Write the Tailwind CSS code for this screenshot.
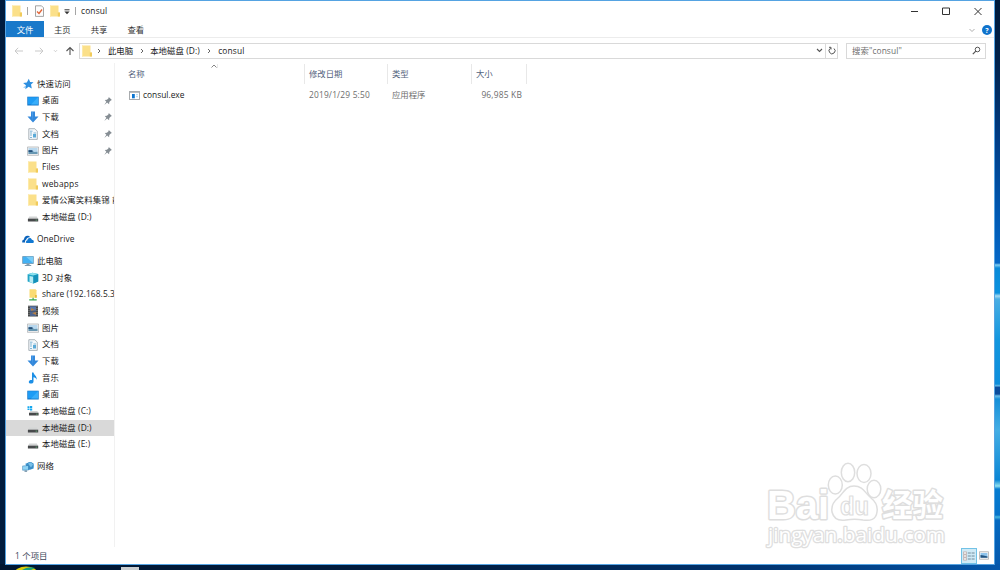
<!DOCTYPE html>
<html lang="zh-CN">
<head>
    <meta charset="UTF-8">
    <meta name="viewport" content="width=device-width, initial-scale=1.0">
    <title>consul</title>
    <script src="https://cdn.jsdelivr.net/npm/@tailwindcss/browser@4"></script>
</head>
<body class="w-[1000px] h-[570px] overflow-hidden relative bg-[#001c3e] font-['Open_Sans','Noto_Sans_CJK_SC',sans-serif] text-[8.4px] leading-none text-[#1a1a1a]">

    <!-- Icons -->
    <svg class="hidden">
        <symbol id="folder" viewBox="0 0 12 12"><path d="M1 .5h8.500v7h1.300v4H1z" fill="#fbe08a"/><path d="M8.800 7.500h2.200v4H8.800z" fill="#f1cb5c"/><path d="M1 .5h1v11H1z" fill="#fdeaa9"/></symbol>
        <symbol id="star" viewBox="0 0 12 12"><path d="M6.800.8l1.300 3.200 3.400.2-2.500 2.400.8 3.900-3.200-1.800-3.300 2.500.6-4L1.100 5l3.700-.6z" fill="#2d8fe0"/><path d="M1 9.500l3-1.800-.5 2.100zM.3 7.300L3 6.800z" fill="#7bbcf0"/></symbol>
        <symbol id="desktop" viewBox="0 0 12 12"><path d="M.3 1.700h11.400v8.800H.3z" fill="#1474c4"/><path d="M.9 2.200h10.200v7.200H.9z" fill="#1e9cf5"/><path d="M11 2.200v7.200H4z" fill="#39aefa"/></symbol>
        <symbol id="download" viewBox="0 0 12 12"><path d="M4 .6h4v5h3.500L6 11.500.5 5.600H4z" fill="#3388db"/><path d="M4.500 1h1.500v9z" fill="#4b9ce8"/></symbol>
        <symbol id="doc" viewBox="0 0 12 12"><path d="M1.800.7h6l2.500 2.500v8.200H1.800z" fill="#f4f8fb" stroke="#8c989f" stroke-width=".7"/><path d="M3 3.200h2.500M3 5h2M6.500 5H9M3 7h2M3 9.500h2" stroke="#64a6ce" stroke-width=".8"/><path d="M6 6h3v3.500H6z" fill="#5aaad7"/></symbol>
        <symbol id="picture" viewBox="0 0 12 12"><path d="M.4 2h11.200v8.300H.4z" fill="#f4f4f4" stroke="#a5a9ad" stroke-width=".7"/><path d="M1.500 3h9v6h-9z" fill="#b8d8ef"/><path d="M1.500 5.500l3 .3 3 1.200 3-.3V9h-9z" fill="#6797b2"/><path d="M1.500 5.200h4v1.700h-4z" fill="#1f4a76"/></symbol>
        <symbol id="drive" viewBox="0 0 12 12"><path d="M2.300 5.500h7.500L11.200 8H.9z" fill="#d3d5d5"/><path d="M.9 7.700h10.300v2.800H.9z" fill="#47494b"/><path d="M8.600 8.700h1.600v.8H8.600z" fill="#64b678"/></symbol>
        <symbol id="drivec" viewBox="0 0 12 12"><path d="M.5 1.200h2v1.700h-2zM3 1h2.200v1.900H3zM.5 3.400h2v1.700h-2zM3 3.400h2.200v2H3z" fill="#14a8ef"/><path d="M3.300 6h7l1.200 2H2z" fill="#d3d5d5"/><path d="M2 7.800h9.600v2.700H2z" fill="#47494b"/><path d="M9 8.700h1.600v.8H9z" fill="#64b678"/></symbol>
        <symbol id="cloud" viewBox="0 0 12 12"><path d="M.3 9.600C-.2 7.500 1 6.600 2 6.500 2 3 6 1.500 8.200 4.200 5.500 3.800 4.300 5.500 4.200 6.800 3 7.200 2.800 8.500 3.300 9.600z" fill="#0b63bb"/><path d="M4.300 10C3.500 8.600 4.500 7.300 5.400 7.300 5.600 4.600 9.200 4.300 9.900 6.800c2.100 0 2.500 2.600 1.200 3.200z" fill="#1279d2"/></symbol>
        <symbol id="pc" viewBox="0 0 12 12"><path d="M.3 1.200h11.400v7.600H.3z" fill="#5f8ba9"/><path d="M.9 1.800h10.200v6.300H.9z" fill="#44b1f3"/><path d="M11.100 1.800v6.300L4 1.800z" fill="#79cdf8"/><path d="M4.500 8.800h3v1.200h-3zM2.800 10h6.400v.9H2.800z" fill="#7f9bae"/></symbol>
        <symbol id="cube" viewBox="0 0 12 12"><path d="M.6 2.300L5.500.8l5.700 1.300v7.500L6.400 11.500.6 9.600z" fill="#22a5c7"/><path d="M.6 2.300L5.500.8l5.700 1.300-4.800 1.500z" fill="#8de1ee"/><path d="M2.500 4l3.900.7v6.500l-3.900-1z" fill="#b9ecf5"/><path d="M6.400 3.700l4.800-1.500v7.400l-4.800 1.900z" fill="#1591ba"/></symbol>
        <symbol id="netfolder" viewBox="0 0 12 12"><path d="M2.500.3h6l1 .9v7.600h-7z" fill="#fadb73"/><path d="M8 6h1.800v2.800H8z" fill="#e8b93e"/><path d="M5.500 8.800h1.200v1.400h3v1.200H2.200v-1.200h3.300z" fill="#37a853"/></symbol>
        <symbol id="video" viewBox="0 0 12 12"><path d="M1 .7h10v10.800H1z" fill="#3e4143"/><path d="M3 1.300h6v4.500H3z" fill="#5b79ad"/><path d="M3 6.300h6V11H3z" fill="#4d6590"/><path d="M4 3l4 2-4 .8zM5 8l4-1v3z" fill="#b98043"/><path d="M2 1.200v10M10 1.200v10" stroke="#d5d5d5" stroke-width=".7" stroke-dasharray="1 1"/></symbol>
        <symbol id="music" viewBox="0 0 12 12"><path d="M5 .4h1.500C6.800 3 10.200 3.600 9.700 7.800 9.100 6 8 5.500 6.500 5.200v4.200c0 2.600-4.700 3-4.700.6C1.800 8.200 4 7.700 5 8.100z" fill="#1c8fe6"/></symbol>
        <symbol id="network" viewBox="0 0 12 12"><path d="M3.300 2.800l5.500-1.700 2.900 1.300v5L6 9z" fill="#4a9fd6"/><circle cx="7.800" cy="4.800" r="3.600" fill="#3b8dc6"/><path d="M6 2.500l3-1 2 2-2 3z" fill="#79c0e8"/><path d="M.4 4.700l6.300-.4v5l-6.300.1z" fill="#3a89bd"/><path d="M1 5.200l5.100-.3v3.800L1 8.800z" fill="#8ed3f4"/><path d="M2.500 9.400h2.600v1.400H2.500z" fill="#6b8da4"/></symbol>
        <symbol id="pin" viewBox="0.500 0.200 7.400 7.400"><path d="M4.900.3L7.800 3l-1 .4-1.400 1.400L5.200 6.800 3.400 5.400.8 7.500l1.900-2.900L1.200 3l2-.3L4.700 1.300z" fill="#858d93"/></symbol>
        <symbol id="chev" viewBox="0 0 4 6"><path d="M1 1l2 2-2 2" fill="none" stroke="#555" stroke-width=".9"/></symbol>
    </svg>

    <!-- Wallpaper to the right of the window -->
    <div class="absolute left-[994px] top-0 w-[6px] h-[570px] bg-[linear-gradient(to_bottom,#001a3a_0px,#00224c_60px,#003d86_140px,#0059b3_215px,#0668c6_263px,#7ecdf0_265px,#0a8ad8_268px,#0b92de_293px,#a5daf2_296px,#4aaee3_299px,#1296de_340px,#0d8edb_384px,#6bbde6_386px,#0a4c9c_387px,#0a4c9c_394px,#6bbde6_396px,#158fd8_399px,#45aee4_430px,#0a86d4_480px,#8fe0ef_486px,#067cd0_489px,#0673c9_515px,#44b5de_517px,#0569c0_520px,#0457ab_570px)]"></div>

    <!-- Taskbar strip -->
    <div class="absolute left-0 top-[564px] w-full h-[6px] bg-[linear-gradient(to_right,#001631_0px,#001c3f_450px,#00336f_760px,#0457ab_1000px)] overflow-hidden">
        <svg class="absolute left-[14px] top-[2px]" width="24" height="4"><ellipse cx="12" cy="7" rx="11.500" ry="6.500" fill="#d9cb0b"/><path d="M8 4q6-4 13-2l-4 2z" fill="#16a17a"/></svg>
        <div class="absolute left-[121px] top-[3px] w-[18px] h-[3px] bg-[#c9cdd0]"></div>
    </div>

    <!-- Explorer window -->
    <div class="absolute left-[5px] top-0 w-[990px] h-[565px] bg-white border border-[#55a3e2] flex flex-col overflow-hidden">

        <!-- Title bar -->
        <div class="h-[20px] shrink-0 flex items-center pl-[5px]">
            <svg class="w-[12px] h-[12px]"><use href="#folder"/></svg>
            <div class="w-px h-[8px] bg-[#a5a5a5] ml-[4px]"></div>
            <svg class="w-[11px] h-[12px] ml-[6px]" viewBox="0 0 11 12"><path d="M1.500.8h6l2 2v8.600h-8z" fill="#fcfcfc" stroke="#8e8e8e" stroke-width=".8"/><path d="M3 6.500l2 2 3-4" fill="none" stroke="#e26335" stroke-width="1.300"/></svg>
            <svg class="w-[12px] h-[12px] ml-[4px]"><use href="#folder"/></svg>
            <svg class="w-[6px] h-[6px] ml-[3px] mt-[2px]" viewBox="0 0 6 6"><path d="M.5.800h5" stroke="#333"/><path d="M.4 2.500h5.200L3 5.200z" fill="#333"/></svg>
            <div class="w-px h-[8px] bg-[#a5a5a5] ml-[5px]"></div>
            <span class="ml-[5px] tracking-[0.15px]">consul</span>
            <svg class="ml-auto mr-[11px] w-[72px] h-[10px]" viewBox="0 0 72 10" fill="none" stroke="#333"><path d="M0 5.500h7"/><path d="M31.500 2h7v6.500h-7z"/><path d="M63.500 2l7 7M70.500 2l-7 7"/></svg>
        </div>

        <!-- Ribbon tabs -->
        <div class="h-[17px] shrink-0 flex items-center border-b border-[#ececec] text-[#333]">
            <div class="w-[38px] h-[16px] pt-[2px] bg-[#1979ca] text-white flex items-center justify-center">文件</div>
            <span class="ml-[10px] pt-[2px]">主页</span>
            <span class="ml-[20px] pt-[2px]">共享</span>
            <span class="ml-[20px] pt-[2px]">查看</span>
            <svg class="ml-auto mt-[2px] w-[6px] h-[5px]" viewBox="0 0 6 5"><path d="M.5 1L3 3.500 5.500 1" fill="none" stroke="#999" stroke-width=".8"/></svg>
            <div class="w-[10px] h-[10px] mt-[2px] ml-[7px] mr-[2px] rounded-full bg-[#0f73cc] text-white text-[7px] font-bold flex items-center justify-center">?</div>
        </div>

        <!-- Address bar -->
        <div class="h-[25px] shrink-0 flex items-center pl-[8px] pr-[8px]">
            <svg class="w-[62px] h-[10px] mt-px" viewBox="0 0 62 10" fill="none"><path d="M9 5H1M4.200 1.800L1 5l3.200 3.200M21 5h8M25.800 1.800L29 5l-3.200 3.200" stroke="#c9c9c9"/><path d="M40 4.200l1.500 1.500L43 4.200" stroke="#c0c0c0" stroke-width=".8"/><path d="M56 9V1.500M52.500 5L56 1.500 59.500 5" stroke="#555" stroke-width="1.100"/></svg>
            <div class="ml-[3px] w-[759px] h-[16px] border border-[#d9d9d9] flex items-center">
                <svg class="w-[12px] h-[12px] ml-px"><use href="#folder"/></svg>
                <svg class="w-[4px] h-[6px] ml-[4px]"><use href="#chev"/></svg>
                <span class="ml-[7px] pt-px">此电脑</span>
                <svg class="w-[4px] h-[6px] ml-[7px]"><use href="#chev"/></svg>
                <span class="ml-[6px] w-[51px] pt-px whitespace-nowrap tracking-[0.1px]">本地磁盘 (D:)</span>
                <svg class="w-[4px] h-[6px] ml-[6px]"><use href="#chev"/></svg>
                <span class="ml-[7px] pt-px tracking-[0.15px]">consul</span>
                <svg class="ml-auto w-[7px] h-[5px] mr-[2px]" viewBox="0 0 7 5"><path d="M1 1l2.500 2.500L6 1" fill="none" stroke="#555" stroke-width="1.100"/></svg>
                <div class="w-[12px] h-full border-l border-[#d9d9d9] flex items-center justify-center">
                    <svg class="w-[8px] h-[9px]" viewBox="0 0 8 9" fill="none" stroke="#555" stroke-width="1"><path d="M2.500 2.200A3 3 0 1 0 6 2.500M1 1.300h2v2.200"/></svg>
                </div>
            </div>
            <div class="ml-[8px] flex-1 h-[16px] border border-[#d9d9d9] flex items-center pl-[5px] text-[#6e6e6e]">
                <span class="pt-px tracking-[0.1px]">搜索"consul"</span>
                <svg class="ml-auto mr-[4px] w-[9px] h-[9px]" viewBox="0 0 9 9" fill="none" stroke="#555"><circle cx="5.500" cy="3.500" r="2.300"/><path d="M3.800 5.200L.8 8.200" stroke-width="1.200"/></svg>
            </div>
        </div>

        <div class="flex flex-1 min-h-0">
            <!-- Navigation pane -->
            <nav class="w-[109px] border-r border-[#f1f1f1] pt-[12.700px] whitespace-nowrap flex flex-col gap-[5.500px] tracking-[0.08px]">
                <div class="*:h-[16.650px] *:w-[108px] *:flex *:items-center *:gap-[3px] *:pl-[21px] *:overflow-hidden">
                    <div class="-ml-[5px]"><svg class="w-[12px] h-[12px] shrink-0"><use href="#star"/></svg>快速访问</div>
                    <div><svg class="w-[12px] h-[12px] shrink-0"><use href="#desktop"/></svg>桌面<svg class="w-[8px] h-[8px] ml-auto mr-[2px]"><use href="#pin"/></svg></div>
                    <div><svg class="w-[12px] h-[12px] shrink-0"><use href="#download"/></svg>下载<svg class="w-[8px] h-[8px] ml-auto mr-[2px]"><use href="#pin"/></svg></div>
                    <div><svg class="w-[12px] h-[12px] shrink-0"><use href="#doc"/></svg>文档<svg class="w-[8px] h-[8px] ml-auto mr-[2px]"><use href="#pin"/></svg></div>
                    <div><svg class="w-[12px] h-[12px] shrink-0"><use href="#picture"/></svg>图片<svg class="w-[8px] h-[8px] ml-auto mr-[2px]"><use href="#pin"/></svg></div>
                    <div><svg class="w-[12px] h-[12px] shrink-0"><use href="#folder"/></svg>Files</div>
                    <div class="tracking-[0.2px]"><svg class="w-[12px] h-[12px] shrink-0"><use href="#folder"/></svg>webapps</div>
                    <div><svg class="w-[12px] h-[12px] shrink-0"><use href="#folder"/></svg>爱情公寓笑料集锦 前</div>
                    <div><svg class="w-[12px] h-[12px] shrink-0"><use href="#drive"/></svg>本地磁盘 (D:)</div>
                </div>
                <div class="h-[16.650px] flex items-center gap-[3px] pl-[16px]"><svg class="w-[12px] h-[12px]"><use href="#cloud"/></svg>OneDrive</div>
                <div class="*:h-[16.650px] *:w-[108px] *:flex *:items-center *:gap-[3px] *:pl-[21px] *:overflow-hidden">
                    <div class="-ml-[5px]"><svg class="w-[12px] h-[12px] shrink-0"><use href="#pc"/></svg>此电脑</div>
                    <div><svg class="w-[12px] h-[12px] shrink-0"><use href="#cube"/></svg>3D 对象</div>
                    <div><svg class="w-[12px] h-[12px] shrink-0"><use href="#netfolder"/></svg>share (192.168.5.3)</div>
                    <div><svg class="w-[12px] h-[12px] shrink-0"><use href="#video"/></svg>视频</div>
                    <div><svg class="w-[12px] h-[12px] shrink-0"><use href="#picture"/></svg>图片</div>
                    <div><svg class="w-[12px] h-[12px] shrink-0"><use href="#doc"/></svg>文档</div>
                    <div><svg class="w-[12px] h-[12px] shrink-0"><use href="#download"/></svg>下载</div>
                    <div><svg class="w-[12px] h-[12px] shrink-0"><use href="#music"/></svg>音乐</div>
                    <div><svg class="w-[12px] h-[12px] shrink-0"><use href="#desktop"/></svg>桌面</div>
                    <div><svg class="w-[12px] h-[12px] shrink-0"><use href="#drivec"/></svg>本地磁盘 (C:)</div>
                    <div class="bg-[#d9d9d9]"><svg class="w-[12px] h-[12px] shrink-0"><use href="#drive"/></svg>本地磁盘 (D:)</div>
                    <div><svg class="w-[12px] h-[12px] shrink-0"><use href="#drive"/></svg>本地磁盘 (E:)</div>
                </div>
                <div class="h-[16.650px] flex items-center gap-[3px] pl-[16px]"><svg class="w-[12px] h-[12px]"><use href="#network"/></svg>网络</div>
            </nav>

            <!-- File list -->
            <main class="flex-1">
                <div class="relative mt-px h-[20px] flex text-[#52627c] *:flex *:items-center *:border-r *:border-[#e8e8e8]">
                    <div class="w-[190px] pl-[13px]">名称</div>
                    <div class="w-[83px] pl-[4px]">修改日期</div>
                    <div class="w-[84px] pl-[4px]">类型</div>
                    <div class="w-[55px] pl-[4px]">大小</div>
                    <svg class="absolute left-[96px] top-0 w-[7px] h-[4px]" viewBox="0 0 6 4"><path d="M.5 3.500L3 1l2.500 2.500" fill="none" stroke="#777" stroke-width=".9"/></svg>
                </div>
                <div class="mt-[2px] h-[18px] flex items-center text-[#6d6d6d]">
                    <div class="w-[194px] pl-[14px] flex items-center gap-[3px] text-[#1a1a1a]">
                        <svg class="w-[11px] h-[9px]" viewBox="0 0 11 9"><path d="M.4.4h10.200v8.200H.4z" fill="#fff" stroke="#85898d" stroke-width=".8"/><path d="M.5.5h10v1.300H.5z" fill="#a9adb1"/><path d="M3 3h2.800v4.300H3z" fill="#0b74d0"/><path d="M7 3h2v1.200H7zM7 5h2v1.200H7z" fill="#b9dcf2"/></svg>consul.exe
                    </div>
                    <div class="w-[83px] tracking-[0.18px]">2019/1/29 5:50</div>
                    <div class="w-[70px]">应用程序</div>
                    <div class="w-[60px] text-right tracking-[0.2px]">96,985 KB</div>
                </div>
            </main>
        </div>

        <!-- Status bar -->
        <div class="h-[17px] shrink-0 flex items-center pl-[9px] text-[#3a4658]">
            <span class="pt-px tracking-[0.1px]">1 个项目</span>
            <div class="ml-auto w-[16px] h-[16px] bg-[#cfeaf6] border border-[#72c2e6] flex items-center justify-center">
                <svg class="w-[12px] h-[10px]" viewBox="0 0 12 10"><path d="M.5.800h3v2.500h-3zM.5 3.800h3v2.400h-3zM.5 6.700h3v2.500h-3z" fill="#eee" stroke="#b79f9c" stroke-width=".6"/><path d="M4.800 2h3M8.600 2h3M4.800 5h3M8.600 5h3M4.800 8h3M8.600 8h3" stroke="#5b7585" stroke-width=".8"/></svg>
            </div>
            <svg class="w-[10px] h-[9px] ml-[2px] mr-[5px]" viewBox="0 0 10 9"><path d="M.4.8h9.200v7.400H.4z" fill="#fff" stroke="#a6a6a6" stroke-width=".8"/><path d="M1.500 2h7v4.600h-7z" fill="#8fc4ec"/><path d="M1.500 4l3 .5 4 1v1.200h-7z" fill="#23537f"/></svg>
        </div>
    </div>

    <!-- Watermark -->
    <svg class="absolute left-[760px] top-[455px] w-[195px] h-[100px]" viewBox="0 0 195 100" fill="#fff" stroke="#dedede" stroke-width="1.500" stroke-linejoin="round">
        <g paint-order="stroke" class="font-['Liberation_Sans','Noto_Sans_CJK_SC',sans-serif]">
            <text x="7" y="64" font-size="41" stroke-width="3" textLength="62" lengthAdjust="spacingAndGlyphs" class="font-bold">Bai</text>
            <text x="122" y="61" font-size="31" stroke-width="3" textLength="61" lengthAdjust="spacingAndGlyphs" class="font-bold">经验</text>
            <text x="8" y="87" font-size="20.500" stroke-width="2.600" textLength="177" lengthAdjust="spacingAndGlyphs" class="font-['Open_Sans',sans-serif] font-medium">jingyan.baidu.com</text>
        </g>
        <ellipse cx="75.300" cy="30" rx="7" ry="9"/>
        <ellipse cx="88" cy="17.500" rx="6.700" ry="9.200"/>
        <ellipse cx="104" cy="18.500" rx="7" ry="9"/>
        <ellipse cx="114" cy="34" rx="6.800" ry="8.700"/>
        <path d="M94 31c-9 0-11 8-16 12-5 4-7 8-6 14 2 8 8 9 14 8 6-1 11-1 17 0 7 1 13 0 14-8 1-6-1-10-6-14-6-5-8-12-17-12z"/>
        <text x="80" y="60" font-size="25" stroke-width="1.200" textLength="29" lengthAdjust="spacingAndGlyphs" class="font-['Liberation_Sans',sans-serif] font-bold">du</text>
    </svg>

</body>
</html>
